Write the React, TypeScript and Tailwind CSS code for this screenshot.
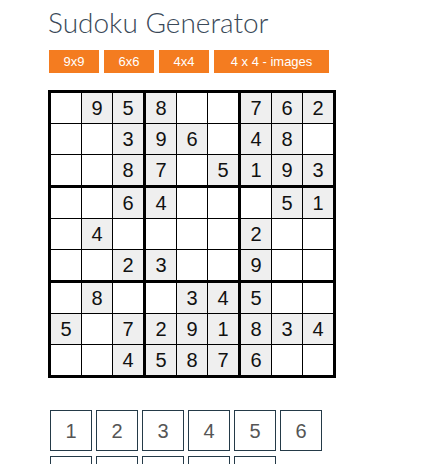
import React from "react";

const grid: string[] = [
  " 958  762",
  "  396 48 ",
  "  87 5193",
  "  64   51",
  " 4    2  ",
  "  23  9  ",
  " 8  345  ",
  "5 7291834",
  "  45876  ",
];

function cellClass(r: number, c: number, filled: boolean) {
  const right =
    c === 8 ? "border-r-0" : c === 2 || c === 5 ? "border-r-[3px]" : "border-r";
  const bottom =
    r === 8 ? "border-b-0" : r === 2 || r === 5 ? "border-b-[3px]" : "border-b";
  const bg = filled ? "bg-[#efefef]" : "bg-white";
  return `${right} ${bottom} ${bg}`;
}

export default function App() {
  const pads = ["1", "2", "3", "4", "5", "6", "7", "8", "9", "", ""];
  return (
    <div className="min-h-screen bg-white pl-[48px] pt-[3px]" style={{ fontFamily: '"Liberation Sans", Arial, sans-serif' }}>
      <h1
        className="text-[28px] font-light leading-[39px] text-[#3a4958]"
        style={{ fontFamily: 'Lato, "Open Sans", sans-serif' }}
      >
        Sudoku Generator
      </h1>
      <div className="mt-[8px] flex gap-[5px] pl-[1px]">
        {["9x9", "6x6", "4x4"].map((t) => (
          <div
            key={t}
            className="flex h-[23px] w-[50px] items-center justify-center bg-[#f47c20] text-[13px] text-white"
          >
            {t}
          </div>
        ))}
        <div className="flex h-[23px] w-[115px] items-center justify-center bg-[#f47c20] text-[13px] text-white">
          4 x 4 - images
        </div>
      </div>
      <div className="mt-[17px] inline-flex flex-col border-[3px] border-black">
        {grid.map((row, r) => (
          <div key={r} className="flex">
            {row.split("").map((ch, c) => (
              <div
                key={c}
                className={`flex h-[30px] w-[30px] box-content items-center justify-center border-black text-[20px] text-[#111] ${cellClass(
                  r,
                  c,
                  ch !== " "
                )}`}
              >
                {ch !== " " ? ch : ""}
              </div>
            ))}
          </div>
        ))}
      </div>
      <div className="mt-[32px] flex w-[280px] flex-wrap gap-x-[4px] gap-y-[5px] pl-[2px]">
        {pads.map((p, i) => (
          <div
            key={i}
            className="flex h-[41px] w-[42px] items-center justify-center border border-[#243a48] text-[20px] text-[#555]"
          >
            {p}
          </div>
        ))}
      </div>
    </div>
  );
}
